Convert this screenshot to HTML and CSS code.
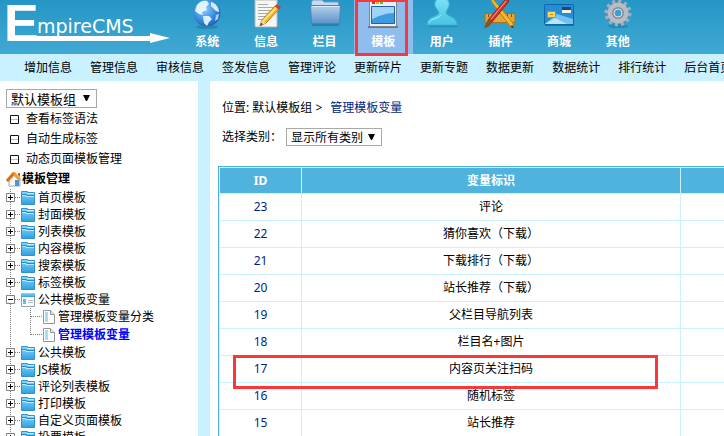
FILE: index.html
```html
<!DOCTYPE html>
<html lang="zh-CN">
<head>
    <meta charset="UTF-8">
    <meta name="viewport" content="width=device-width, initial-scale=1.0">
    <title>EmpireCMS - 管理模板变量</title>
    <link rel="stylesheet" href="styles.css">
</head>
<body>
    <!-- shared icons -->
    <svg class="defs" width="0" height="0" aria-hidden="true">
        <defs>
            <linearGradient id="blue" x1="0" y1="0" x2="0" y2="1">
                <stop offset="0" stop-color="#8ad8fa"/>
                <stop offset="1" stop-color="#2e9fe0"/>
            </linearGradient>
            <linearGradient id="folderBig" x1="0" y1="0" x2="0" y2="1">
                <stop offset="0" stop-color="#b4d2ec"/>
                <stop offset="1" stop-color="#5e93c8"/>
            </linearGradient>
            <linearGradient id="person" x1="0" y1="0" x2="0" y2="1">
                <stop offset="0" stop-color="#7fe0f5"/>
                <stop offset="1" stop-color="#45c4e2"/>
            </linearGradient>
            <radialGradient id="globe" cx="0.4" cy="0.35" r="0.65">
                <stop offset="0" stop-color="#8fd0ff"/>
                <stop offset="0.6" stop-color="#3f92e2"/>
                <stop offset="1" stop-color="#1f66bd"/>
            </radialGradient>
            <symbol id="folder" viewBox="0 0 14 14">
                <path d="M0.5 0.5H6.5V1.5H13.5V13.5H0.5Z" fill="url(#blue)" stroke="#2f93d2"/>
                <path d="M1 3.5H5.5V4.5H13" fill="none" stroke="#2588c8"/>
                <path d="M1 4.5H5V5.5H13" fill="none" stroke="#b9e8ff"/>
                <path d="M6 2.5H13" stroke="#c9efff"/>
            </symbol>
            <symbol id="page" viewBox="0 0 12 14">
                <path d="M0.5 0.5H7.5L11.5 4.5V13.5H0.5Z" fill="#fff" stroke="#8f979d"/>
                <path d="M7.5 0.5V4.5H11.5" fill="#e4e9ec" stroke="#8f979d"/>
                <path d="M2 2H5V12H2Z" fill="#a9dcf5"/>
            </symbol>
            <symbol id="plus" viewBox="0 0 15 17">
                <path d="M4.5 0V4M4.5 13V17M9 8.5H15" stroke="#808080" stroke-dasharray="1 1"/>
                <path d="M0.5 4.5H8.5V12.5H0.5Z" fill="#fff" stroke="#808080"/>
                <path d="M2 8.5H7M4.5 6V11" stroke="#000"/>
            </symbol>
            <symbol id="minus" viewBox="0 0 15 17">
                <path d="M4.5 0V4M4.5 13V17M9 8.5H15" stroke="#808080" stroke-dasharray="1 1"/>
                <path d="M0.5 4.5H8.5V12.5H0.5Z" fill="#fff" stroke="#808080"/>
                <path d="M2 8.5H7" stroke="#000"/>
            </symbol>
            <symbol id="branch" viewBox="0 0 37 18">
                <path d="M4.5 0V18M24.5 0V18M25 8.5H36" stroke="#808080" stroke-dasharray="1 1"/>
            </symbol>
            <symbol id="branchEnd" viewBox="0 0 37 18">
                <path d="M4.5 0V18M24.5 0V9M25 8.5H36" stroke="#808080" stroke-dasharray="1 1"/>
            </symbol>
            <symbol id="box" viewBox="0 0 9 9">
                <path d="M0.5 0.5H8.5V8.5H0.5Z" fill="#fff" stroke="#111"/>
                <path d="M1 4.5H8" stroke="#bbb"/>
            </symbol>
        </defs>
    </svg>

    <header class="header">
        <svg class="logo" width="170" height="54" viewBox="0 0 170 54" role="img" aria-label="EmpireCMS">
            <text class="logo-initial" x="4" y="41">E</text>
            <text class="logo-name" x="37" y="33">mpireCMS</text>
            <path d="M10 36H150V33L170 38L150 43V41H10Z" fill="#fff"/>
        </svg>
        <nav class="menu">
            <a class="menu-item" href="#">
                <svg width="32" height="30" viewBox="0 0 32 30">
                    <ellipse cx="16" cy="27" rx="11" ry="2" fill="#1c6f9b" opacity="0.5"/>
                    <circle cx="16" cy="13" r="13.500" fill="url(#globe)"/>
                    <path d="M6 5C9 1 13 0 16 1L18 4L15 7L16 10L11 12L12 15L8 14L4 11Z" fill="#e3f4ff"/>
                    <path d="M20 2C25 3 28 8 28 12L25 11L22 8L20 6Z" fill="#d5edff"/>
                    <path d="M12 16L18 16L21 19L18 22L16 26L13 23Z" fill="#d8efff"/>
                    <path d="M25 15L28 14L27 19L24 21Z" fill="#a6d6fa"/>
                </svg>
                系统
            </a>
            <a class="menu-item" href="#">
                <svg width="32" height="30" viewBox="0 0 32 30">
                    <path d="M4 26H28V28H4Z" fill="#1c6f9b" opacity="0.5"/>
                    <path d="M5 0H27V27H5Z" fill="#f6f6f3" stroke="#b5b8b8"/>
                    <path d="M8 4.5H18M8 7.5H23M8 10.5H20M8 13.5H18M8 16.5H15M8 19.5H14" stroke="#a7aaab"/>
                    <path d="M10 26L12 20L25 6L29 9L16 23Z" fill="#f7b52c" stroke="#b87812"/>
                    <path d="M13 21L26 8" stroke="#ffe27c" stroke-width="2"/>
                    <path d="M10 26L12 20L16 23Z" fill="#f3d6a4"/>
                    <path d="M10 26L11 23L13 24Z" fill="#333"/>
                    <path d="M25 6L27 4L31 7L29 10Z" fill="#d5392f"/>
                </svg>
                信息
            </a>
            <a class="menu-item" href="#">
                <svg width="32" height="30" viewBox="0 0 32 30">
                    <path d="M3 24H30V26H3Z" fill="#1c6f9b" opacity="0.6"/>
                    <path d="M2.500 2L4 0H13L15 2H29.500V12H2.500Z" fill="#c7dbec" stroke="#6f9cc5"/>
                    <path d="M1.500 5.500H31.500L30.500 23.500H2.500Z" fill="url(#folderBig)" stroke="#4d82b8"/>
                    <path d="M3 6.500H30" stroke="#dcedfa"/>
                </svg>
                栏目
            </a>
            <a class="menu-item active" href="#">
                <svg width="32" height="30" viewBox="0 0 32 30">
                    <path d="M1 26H31V28H1Z" fill="#59779c"/>
                    <path d="M2.500 -2H29.500V26.500H2.500Z" fill="#eceeee" stroke="#7f8991"/>
                    <path d="M5 2.500H8" stroke="#e03021" stroke-width="3"/>
                    <path d="M9 2.500H12" stroke="#f1a71f" stroke-width="3"/>
                    <path d="M13 2.500H16" stroke="#64b936" stroke-width="3"/>
                    <path d="M4.500 6.500H27.500V23.500H4.500Z" fill="#3f9be0" stroke="#1f64a8"/>
                    <path d="M5 7H27V13C19 13 12 16 5 19Z" fill="#9fd3f8"/>
                </svg>
                模板
                <span class="mark mark-menu"></span>
            </a>
            <a class="menu-item" href="#">
                <svg width="32" height="30" viewBox="0 0 32 30">
                    <path d="M2 25H31V27H2Z" fill="#1c6f9b" opacity="0.5"/>
                    <path d="M16 -2C21 -2 24 1 23 6C22 9 20 11 20 13C21 17 31 16 31 25H1C1 16 12 17 13 13C13 11 10 9 9 6C8 1 11 -2 16 -2Z" fill="url(#person)" stroke="#38b4d4"/>
                    <path d="M3 23C5 18 12 19 15 15" fill="none" stroke="#a6eefa"/>
                </svg>
                用户
            </a>
            <a class="menu-item" href="#">
                <svg width="32" height="30" viewBox="0 0 32 30">
                    <path d="M1 13.500H31V22.500H1Z" fill="#e0a63a" stroke="#a87218"/>
                    <path d="M4.500 14V17M8.500 14V18M12.500 14V17M19.500 14V17M23.500 14V18M27.500 14V17" stroke="#81540c"/>
                    <path d="M9 -1L29 23L30 28L26 26L7 1Z" fill="#f8b62d" stroke="#bd7c14"/>
                    <path d="M28 25L30 28L27 27Z" fill="#222"/>
                    <path d="M22 -1L25 1L8 22L4 20Z" fill="#d8372f" stroke="#97201b"/>
                    <path d="M22 1L7 19" stroke="#f4a39b"/>
                    <path d="M5 19L8 22C7 25 4 28 0 28C2 25 2 21 5 19Z" fill="#85532b"/>
                </svg>
                插件
            </a>
            <a class="menu-item" href="#">
                <svg width="32" height="30" viewBox="0 0 32 30">
                    <path d="M2 24H31V26H2Z" fill="#1c5d85" opacity="0.7"/>
                    <rect x="1.500" y="4.500" width="29" height="20" rx="1" fill="#238ed6" stroke="#1265a5"/>
                    <path d="M2 24L14 14L30 19V24Z" fill="#74c3ef"/>
                    <path d="M2 24L12 18L24 24Z" fill="#b9e4fa"/>
                    <path d="M19 7H28V10H19Z" fill="#1b4789"/>
                    <path d="M19 10H28V13H19Z" fill="#f7f3df"/>
                    <rect x="4.500" y="11.500" width="8" height="6" rx="1" fill="#ffd65c" stroke="#c88912"/>
                    <path d="M7 14.500H10" stroke="#c88912"/>
                </svg>
                商城
            </a>
            <a class="menu-item" href="#">
                <svg width="32" height="30" viewBox="0 0 32 30">
                    <ellipse cx="16" cy="26" rx="10" ry="2" fill="#1c6f9b" opacity="0.5"/>
                    <circle cx="16" cy="13" r="11.500" fill="none" stroke="#a9adb5" stroke-width="4" stroke-dasharray="3 3"/>
                    <circle cx="16" cy="13" r="8" fill="none" stroke="#b9bcc4" stroke-width="5"/>
                    <circle cx="16" cy="13" r="6" fill="#8b8f99"/>
                    <circle cx="16" cy="13" r="4" fill="#3aa2cd" stroke="#dfe2e5"/>
                </svg>
                其他
            </a>
        </nav>
    </header>

    <nav class="subnav">
        <a href="#">增加信息</a>
        <a href="#">管理信息</a>
        <a href="#">审核信息</a>
        <a href="#">签发信息</a>
        <a href="#">管理评论</a>
        <a href="#">更新碎片</a>
        <a href="#">更新专题</a>
        <a href="#">数据更新</a>
        <a href="#">数据统计</a>
        <a href="#">排行统计</a>
        <a href="#">后台首页</a>
    </nav>

    <div class="content">
        <aside class="sidebar">
            <select class="select select-group" aria-label="模板组">
                <option>默认模板组</option>
            </select>
            <ul class="shortcuts">
                <li><svg width="9" height="9"><use href="#box"/></svg><a href="#">查看标签语法</a></li>
                <li><svg width="9" height="9"><use href="#box"/></svg><a href="#">自动生成标签</a></li>
                <li><svg width="9" height="9"><use href="#box"/></svg><a href="#">动态页面模板管理</a></li>
            </ul>
            <div class="tree-title">
                <svg width="16" height="16" viewBox="0 0 16 16">
                    <path d="M3 8L8 3L14 8V15H3Z" fill="#f5f8fb" stroke="#9aabba"/>
                    <path d="M0 9L7 1L9 1L15 8L13 10L8 5L2 11Z" fill="#f39a32"/>
                    <path d="M0 9L7 1L8 4L2 11Z" fill="#d9701f"/>
                    <path d="M9 9H13V15H9Z" fill="#5592cf"/>
                    <path d="M12 2H14V6L12 4Z" fill="#c25a20"/>
                </svg>
                模板管理
            </div>
            <ul class="tree">
                <li><button class="toggle" aria-label="展开"><svg width="15" height="17"><use href="#plus"/></svg></button><svg width="14" height="14"><use href="#folder"/></svg><a href="#">首页模板</a></li>
                <li><button class="toggle" aria-label="展开"><svg width="15" height="17"><use href="#plus"/></svg></button><svg width="14" height="14"><use href="#folder"/></svg><a href="#">封面模板</a></li>
                <li><button class="toggle" aria-label="展开"><svg width="15" height="17"><use href="#plus"/></svg></button><svg width="14" height="14"><use href="#folder"/></svg><a href="#">列表模板</a></li>
                <li><button class="toggle" aria-label="展开"><svg width="15" height="17"><use href="#plus"/></svg></button><svg width="14" height="14"><use href="#folder"/></svg><a href="#">内容模板</a></li>
                <li><button class="toggle" aria-label="展开"><svg width="15" height="17"><use href="#plus"/></svg></button><svg width="14" height="14"><use href="#folder"/></svg><a href="#">搜索模板</a></li>
                <li><button class="toggle" aria-label="展开"><svg width="15" height="17"><use href="#plus"/></svg></button><svg width="14" height="14"><use href="#folder"/></svg><a href="#">标签模板</a></li>
                <li>
                    <button class="toggle" aria-label="收起"><svg width="15" height="17"><use href="#minus"/></svg></button>
                    <svg width="14" height="14" viewBox="0 0 14 14">
                        <path d="M0.5 0.5H13.5V13.5H0.5Z" fill="#fff" stroke="#8fa3b0"/>
                        <path d="M0 0H14V4H0Z" fill="url(#blue)"/>
                        <path d="M2 6H5V11H2Z" fill="#5bbcf0"/>
                        <path d="M7 7.5H12M7 9.5H12" stroke="#b6bdc2"/>
                    </svg>
                    <a href="#">公共模板变量</a>
                </li>
                <li class="sub"><svg width="37" height="18"><use href="#branch"/></svg><svg width="12" height="14"><use href="#page"/></svg><a href="#">管理模板变量分类</a></li>
                <li class="sub current"><svg width="37" height="18"><use href="#branchEnd"/></svg><svg width="12" height="14"><use href="#page"/></svg><a href="#">管理模板变量</a></li>
                <li><button class="toggle" aria-label="展开"><svg width="15" height="17"><use href="#plus"/></svg></button><svg width="14" height="14"><use href="#folder"/></svg><a href="#">公共模板</a></li>
                <li><button class="toggle" aria-label="展开"><svg width="15" height="17"><use href="#plus"/></svg></button><svg width="14" height="14"><use href="#folder"/></svg><a href="#">JS模板</a></li>
                <li><button class="toggle" aria-label="展开"><svg width="15" height="17"><use href="#plus"/></svg></button><svg width="14" height="14"><use href="#folder"/></svg><a href="#">评论列表模板</a></li>
                <li><button class="toggle" aria-label="展开"><svg width="15" height="17"><use href="#plus"/></svg></button><svg width="14" height="14"><use href="#folder"/></svg><a href="#">打印模板</a></li>
                <li><button class="toggle" aria-label="展开"><svg width="15" height="17"><use href="#plus"/></svg></button><svg width="14" height="14"><use href="#folder"/></svg><a href="#">自定义页面模板</a></li>
                <li><button class="toggle" aria-label="展开"><svg width="15" height="17"><use href="#plus"/></svg></button><svg width="14" height="14"><use href="#folder"/></svg><a href="#">投票模板</a></li>
            </ul>
        </aside>

        <main class="main">
            <div class="position">
                <span>位置: 默认模板组 &gt;</span>
                <a href="#">管理模板变量</a>
            </div>
            <div class="filter">
                <label for="classid">选择类别：</label>
                <select class="select select-class" id="classid">
                    <option>显示所有类别</option>
                </select>
            </div>
            <table class="list">
                <colgroup>
                    <col class="col-id">
                    <col class="col-name">
                    <col>
                </colgroup>
                <thead>
                    <tr><th>ID</th><th>变量标识</th><th></th></tr>
                </thead>
                <tbody>
                    <tr><td>23</td><td>评论</td><td></td></tr>
                    <tr><td>22</td><td>猜你喜欢（下载）</td><td></td></tr>
                    <tr><td>21</td><td>下载排行（下载）</td><td></td></tr>
                    <tr><td>20</td><td>站长推荐（下载）</td><td></td></tr>
                    <tr><td>19</td><td>父栏目导航列表</td><td></td></tr>
                    <tr><td>18</td><td>栏目名+图片</td><td></td></tr>
                    <tr><td class="marked">17<span class="mark mark-row"></span></td><td>内容页关注扫码</td><td></td></tr>
                    <tr><td>16</td><td>随机标签</td><td></td></tr>
                    <tr><td>15</td><td>站长推荐</td><td></td></tr>
                </tbody>
            </table>
        </main>
    </div>
</body>
</html>
```
FILE: styles.css
```css
* {
    box-sizing: border-box;
}

body {
    margin: 0;
    height: 100vh;
    overflow: hidden;
    display: flex;
    flex-direction: column;
    background: #fff;
    color: #000;
    font-family: "Noto Sans", "Noto Sans CJK SC", sans-serif;
    font-size: 12px;
    line-height: 18px;
}

a {
    color: inherit;
    text-decoration: none;
}

a:hover {
    text-decoration: underline;
}

ul {
    margin: 0;
    padding: 0;
    list-style: none;
}

svg {
    display: block;
    flex-shrink: 0;
}

.defs {
    position: absolute;
}

/* top bar */
.header {
    display: flex;
    flex-shrink: 0;
    gap: 8px;
    height: 54px;
    background: linear-gradient(#2596c5, #40a9d3);
}

.logo {
    overflow: visible;
}

.logo-initial {
    fill: #fff;
    font: bold 52px "Liberation Sans", sans-serif;
}

.logo-name {
    fill: #fff;
    font: 19px "DejaVu Sans", sans-serif;
}

.menu {
    display: flex;
    width: 469px;
}

.menu-item {
    position: relative;
    flex: 1;
    display: flex;
    flex-direction: column;
    align-items: center;
    gap: 3px;
    color: #fff;
    font-weight: bold;
}

.menu-item.active {
    background: #8fbdee;
}

.subnav {
    display: flex;
    flex-shrink: 0;
    align-items: center;
    gap: 18px;
    height: 27px;
    padding-left: 24px;
    background: #c9f1ff;
    white-space: nowrap;
}

/* red frames drawn over the page */
.mark {
    position: absolute;
    z-index: 2;
    border: 3px solid #fb3838;
    pointer-events: none;
}

.mark-menu {
    top: 0;
    left: 1px;
    width: 53px;
    height: 56px;
    border-top-width: 2px;
}

.mark-row {
    top: -1px;
    left: 13px;
    width: 425px;
    height: 34px;
}

.content {
    flex: 1;
    display: flex;
    min-height: 0;
}

.select {
    appearance: none;
    border: 1px solid #a9a9a9;
    border-radius: 0;
    color: #000;
    font-family: inherit;
    background: #fff url("data:image/svg+xml,%3Csvg xmlns='http://www.w3.org/2000/svg' width='7' height='6'%3E%3Cpath d='M0 0H7L4 6H3Z'/%3E%3C/svg%3E") no-repeat right 6px top 5px;
}

/* left tree */
.sidebar {
    flex: 0 0 210px;
    padding: 8px 6px 0;
    border-right: 12px solid #c9f1ff;
    overflow: hidden;
    white-space: nowrap;
}

.select-group {
    display: block;
    width: 91px;
    height: 19px;
    padding: 0 4px;
    font-size: 13px;
}

.shortcuts {
    padding-top: 1px;
}

.shortcuts li {
    display: flex;
    align-items: center;
    gap: 7px;
    height: 20px;
    padding-left: 4px;
}

.tree-title {
    display: flex;
    align-items: center;
    height: 20px;
    font-weight: bold;
}

.tree li {
    display: flex;
    align-items: center;
    height: 17px;
}

.tree .sub {
    height: 18px;
}

.tree a {
    padding-left: 3px;
}

.tree .current {
    color: #00f;
    font-weight: bold;
}

.toggle {
    padding: 0;
    border: 0;
    background: none;
    cursor: pointer;
}

/* right side */
.main {
    flex: 1;
    min-width: 0;
    padding: 18px 0 0 8px;
    overflow: hidden;
}

.position {
    display: flex;
    gap: 8px;
    padding-left: 4px;
}

.position a {
    color: #001f7e;
}

.filter {
    display: flex;
    align-items: center;
    gap: 4px;
    margin: 11px 0 20px;
    padding-left: 4px;
}

.select-class {
    width: 96px;
    height: 18px;
    padding: 0 4px;
    font-size: 12px;
}

.list {
    width: calc(100% + 80px);
    table-layout: fixed;
    border: 1px solid #4fb3de;
    border-spacing: 1px;
    background: #c9f1ff;
    text-align: center;
}

.col-id {
    width: 81px;
}

.col-name {
    width: 378px;
}

.list th {
    height: 25px;
    padding: 0;
    background: #4fb3de;
    color: #fff;
}

.list td {
    height: 26px;
    padding: 0;
    background: #fff;
}

.list td:first-child {
    color: #001f7e;
}

.list .marked {
    position: relative;
}
```
